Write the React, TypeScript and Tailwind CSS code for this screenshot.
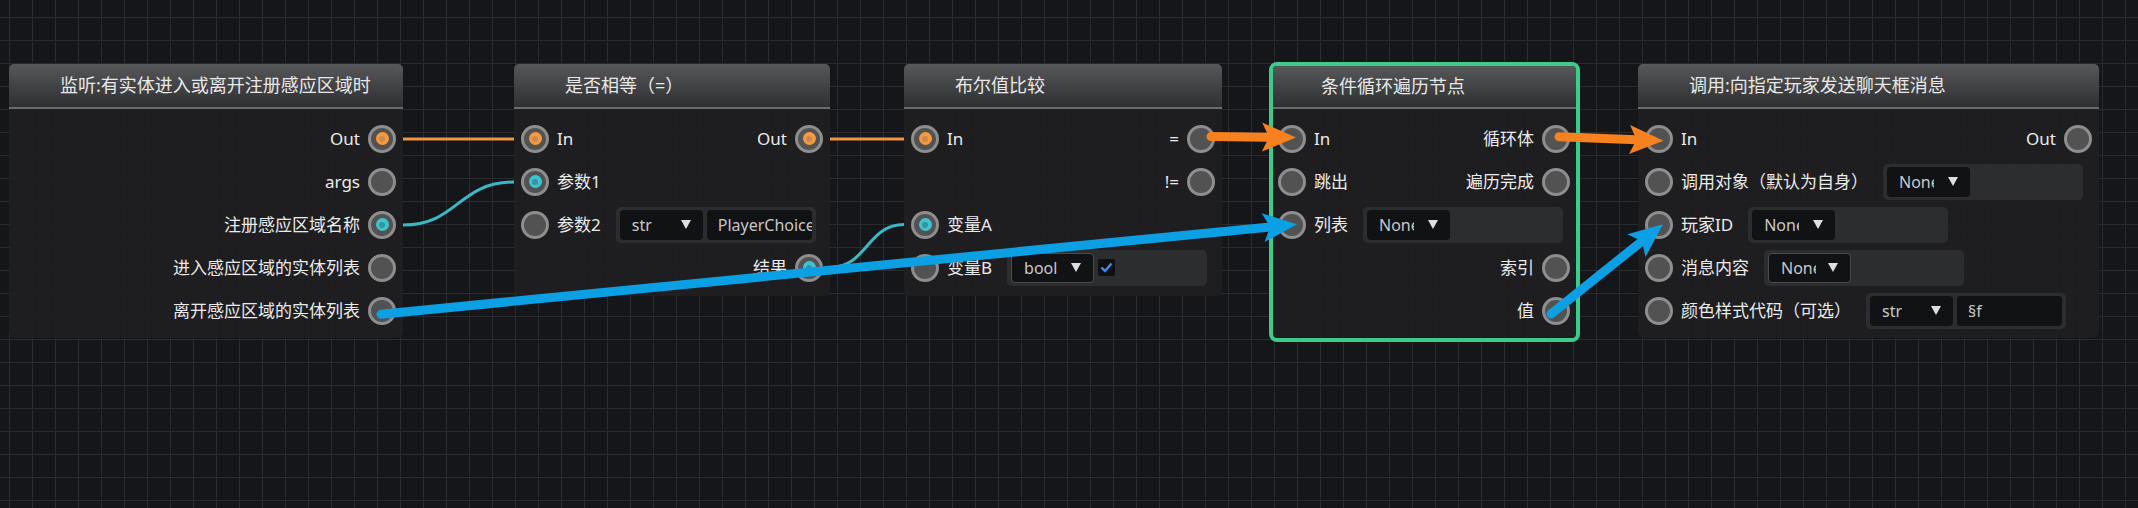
import React from 'react';

type Kind = 'exec' | 'data' | 'none';

function Socket({ kind = 'none' }: { kind?: Kind }) {
  return (
    <div className="w-[28px] h-[28px] shrink-0 rounded-full border-[3px] border-[#8e8e8e] bg-[#525252] flex items-center justify-center">
      {kind === 'exec' && (
        <div className="w-[13px] h-[13px] rounded-full bg-[#f59b3d] flex items-center justify-center">
          <div className="w-[6px] h-[6px] rounded-full bg-[#c98a52]" />
        </div>
      )}
      {kind === 'data' && (
        <div className="w-[13px] h-[13px] rounded-full bg-[#3ec4d1] flex items-center justify-center">
          <div className="w-[6px] h-[6px] rounded-full bg-[#3a939c]" />
        </div>
      )}
    </div>
  );
}

function Caret() {
  return (
    <svg width="10" height="9" viewBox="0 0 10 9" className="shrink-0">
      <polygon points="0,0 10,0 5,9" fill="#dedede" />
    </svg>
  );
}

function Dropdown({ value, clip = false, bordered = false }: { value: string; clip?: boolean; bordered?: boolean }) {
  return (
    <div
      className={
        'h-full w-[83px] shrink-0 rounded-[4px] bg-[#111214] flex items-center justify-between pl-[12px] pr-[12px] ' +
        (bordered ? 'border border-[#4a4b4e]' : '')
      }
    >
      <span className={'overflow-hidden whitespace-nowrap text-[16px] text-[#c9c9c9] ' + (clip ? 'w-[35px]' : '')}>{value}</span>
      <Caret />
    </div>
  );
}

function Widget({ children }: { children: React.ReactNode }) {
  return (
    <div className="w-[200px] h-[36px] shrink-0 rounded-[5px] bg-[#2c2d2f] px-[4px] py-[3px] flex gap-[4px]">
      {children}
    </div>
  );
}

function TextInput({ value }: { value: string }) {
  return (
    <div className="h-full flex-1 min-w-0 rounded-[4px] bg-[#111214] pl-[11px] flex items-center overflow-hidden">
      <span className="whitespace-nowrap text-[16px] text-[#c6c6c6]">{value}</span>
    </div>
  );
}

function Check() {
  return (
    <div className="self-center w-[17px] h-[17px] rounded-[2px] bg-[#0f1012] flex items-center justify-center">
      <svg width="13" height="11" viewBox="0 0 13 11">
        <path d="M1.5 5.5 L5 9 L11.5 1.5" stroke="#3f8df2" strokeWidth="2.4" fill="none" />
      </svg>
    </div>
  );
}

function In({ label, kind, children }: { label: string; kind?: Kind; children?: React.ReactNode }) {
  return (
    <div className="flex items-center gap-[15px]">
      <div className="flex items-center gap-2">
        <Socket kind={kind} />
        <span className="whitespace-nowrap">{label}</span>
      </div>
      {children}
    </div>
  );
}

function Out({ label, kind }: { label: string; kind?: Kind }) {
  return (
    <div className="ml-auto flex items-center gap-2">
      <span className="whitespace-nowrap">{label}</span>
      <Socket kind={kind} />
    </div>
  );
}

function Row({ children }: { children: React.ReactNode }) {
  return <div className="h-[43px] flex items-center justify-between">{children}</div>;
}

function Header({ title }: { title: string }) {
  return (
    <div className="h-[45px] border-b-2 border-[#6a6b6d] bg-gradient-to-b from-[rgba(92,93,95,0.92)] to-[rgba(48,49,51,0.92)] rounded-t-[5px] flex items-center pl-[51px] text-[18px] text-[#e8e8e8] whitespace-nowrap">
      {title}
    </div>
  );
}

function arrowParts(sx: number, sy: number, tx: number, ty: number) {
  const L = 34;
  const W = 14.5;
  const notch = 7;
  const dx = tx - sx;
  const dy = ty - sy;
  const len = Math.hypot(dx, dy);
  const ux = dx / len;
  const uy = dy / len;
  const px = -uy;
  const py = ux;
  const bx = tx - ux * L;
  const by = ty - uy * L;
  const nx = tx - ux * (L - notch);
  const ny = ty - uy * (L - notch);
  const pts = [
    [tx, ty],
    [bx + px * W, by + py * W],
    [nx, ny],
    [bx - px * W, by - py * W],
  ]
    .map((p) => p[0].toFixed(1) + ',' + p[1].toFixed(1))
    .join(' ');
  return { line: `M${sx} ${sy} L${nx.toFixed(1)} ${ny.toFixed(1)}`, pts };
}

function Arrow({ s, t, color }: { s: [number, number]; t: [number, number]; color: string }) {
  const a = arrowParts(s[0], s[1], t[0], t[1]);
  return (
    <g>
      <path d={a.line} stroke={color} strokeWidth="9" strokeLinecap="round" fill="none" />
      <polygon points={a.pts} fill={color} />
    </g>
  );
}

export default function App() {
  return (
    <div className="relative w-[2138px] h-[508px] overflow-hidden bg-[#151619] bg-[linear-gradient(to_right,#2a2b2e_1px,transparent_1px),linear-gradient(to_bottom,#2a2b2e_1px,transparent_1px)] bg-[size:23px_23px] bg-[position:9px_17px] font-['Noto_Sans','Noto_Sans_CJK_SC',sans-serif] text-[17px] text-[#ebebeb]">
      {/* wires under the nodes */}
      <svg className="absolute inset-0 pointer-events-none" width="2138" height="508">
        <path d="M403 139 L514 139" stroke="#f0963e" strokeWidth="3" />
        <path d="M830 139 L904 139" stroke="#f0963e" strokeWidth="3" />
        <path d="M403 225 C458 225, 458 182, 514 182" stroke="#3bb8c5" strokeWidth="3" fill="none" />
        <path d="M830 267.5 C867 267.5, 867 224.5, 904 224.5" stroke="#3bb8c5" strokeWidth="3" fill="none" />
      </svg>

      {/* 监听 */}
      <div className="absolute left-[9px] top-[64px] w-[394px] rounded-[6px] bg-[#1f2022]/[0.92]">
        <Header title="监听:有实体进入或离开注册感应区域时" />
        <div className="px-[7px] pt-[8px] pb-[6px]">
          <Row><Out label="Out" kind="exec" /></Row>
          <Row><Out label="args" /></Row>
          <Row><Out label="注册感应区域名称" kind="data" /></Row>
          <Row><Out label="进入感应区域的实体列表" /></Row>
          <Row><Out label="离开感应区域的实体列表" /></Row>
        </div>
      </div>

      {/* 是否相等 */}
      <div className="absolute left-[514px] top-[64px] w-[316px] rounded-[6px] bg-[#1f2022]/[0.92]">
        <Header title="是否相等（=）" />
        <div className="px-[7px] pt-[8px] pb-[7px]">
          <Row>
            <In label="In" kind="exec" />
            <Out label="Out" kind="exec" />
          </Row>
          <Row><In label="参数1" kind="data" /></Row>
          <Row>
            <In label="参数2">
              <Widget>
                <Dropdown value="str" />
                <TextInput value="PlayerChoice" />
              </Widget>
            </In>
          </Row>
          <Row><Out label="结果" kind="data" /></Row>
        </div>
      </div>

      {/* 布尔值比较 */}
      <div className="absolute left-[904px] top-[64px] w-[318px] rounded-[6px] bg-[#1f2022]/[0.92]">
        <Header title="布尔值比较" />
        <div className="px-[7px] pt-[8px] pb-[7px]">
          <Row>
            <In label="In" kind="exec" />
            <Out label="=" />
          </Row>
          <Row><Out label="!=" /></Row>
          <Row><In label="变量A" kind="data" /></Row>
          <Row>
            <In label="变量B">
              <Widget>
                <Dropdown value="bool" bordered />
                <Check />
              </Widget>
            </In>
          </Row>
        </div>
      </div>

      {/* 条件循环遍历节点 (selected) */}
      <div className="absolute left-[1269px] top-[62px] w-[311px] rounded-[8px] border-4 border-[#3dcb8c] bg-[#1f2022]/[0.92]">
        <div className="h-[43px] border-b-2 border-[#6a6b6d] bg-gradient-to-b from-[rgba(92,93,95,0.92)] to-[rgba(48,49,51,0.92)] rounded-t-[4px] flex items-center pl-[48px] text-[18px] text-[#e8e8e8] whitespace-nowrap">
          条件循环遍历节点
        </div>
        <div className="pl-[5px] pr-[6px] pt-[8px] pb-[6px]">
          <Row>
            <In label="In" />
            <Out label="循环体" />
          </Row>
          <Row>
            <In label="跳出" />
            <Out label="遍历完成" />
          </Row>
          <Row>
            <In label="列表">
              <Widget>
                <Dropdown value="None" clip />
              </Widget>
            </In>
          </Row>
          <Row><Out label="索引" /></Row>
          <Row><Out label="值" /></Row>
        </div>
      </div>

      {/* 调用:向指定玩家发送聊天框消息 */}
      <div className="absolute left-[1638px] top-[64px] w-[461px] rounded-[6px] bg-[#1f2022]/[0.92]">
        <Header title="调用:向指定玩家发送聊天框消息" />
        <div className="px-[7px] pt-[8px] pb-[6px]">
          <Row>
            <In label="In" />
            <Out label="Out" />
          </Row>
          <Row>
            <In label="调用对象（默认为自身）">
              <Widget>
                <Dropdown value="None" clip />
              </Widget>
            </In>
          </Row>
          <Row>
            <In label="玩家ID">
              <Widget>
                <Dropdown value="None" clip />
              </Widget>
            </In>
          </Row>
          <Row>
            <In label="消息内容">
              <Widget>
                <Dropdown value="None" clip bordered />
              </Widget>
            </In>
          </Row>
          <Row>
            <In label="颜色样式代码（可选）">
              <Widget>
                <Dropdown value="str" />
                <TextInput value="§f" />
              </Widget>
            </In>
          </Row>
        </div>
      </div>

      {/* annotation arrows */}
      <svg className="absolute inset-0 pointer-events-none" width="2138" height="508">
        <Arrow s={[1211, 136.5]} t={[1296, 137.5]} color="#f7811f" />
        <Arrow s={[1559, 136.8]} t={[1663.5, 140.7]} color="#f7811f" />
        <Arrow s={[381, 314.3]} t={[1297, 224.3]} color="#0b9fe3" />
        <Arrow s={[1551, 314]} t={[1663, 224.3]} color="#0b9fe3" />
      </svg>
    </div>
  );
}
